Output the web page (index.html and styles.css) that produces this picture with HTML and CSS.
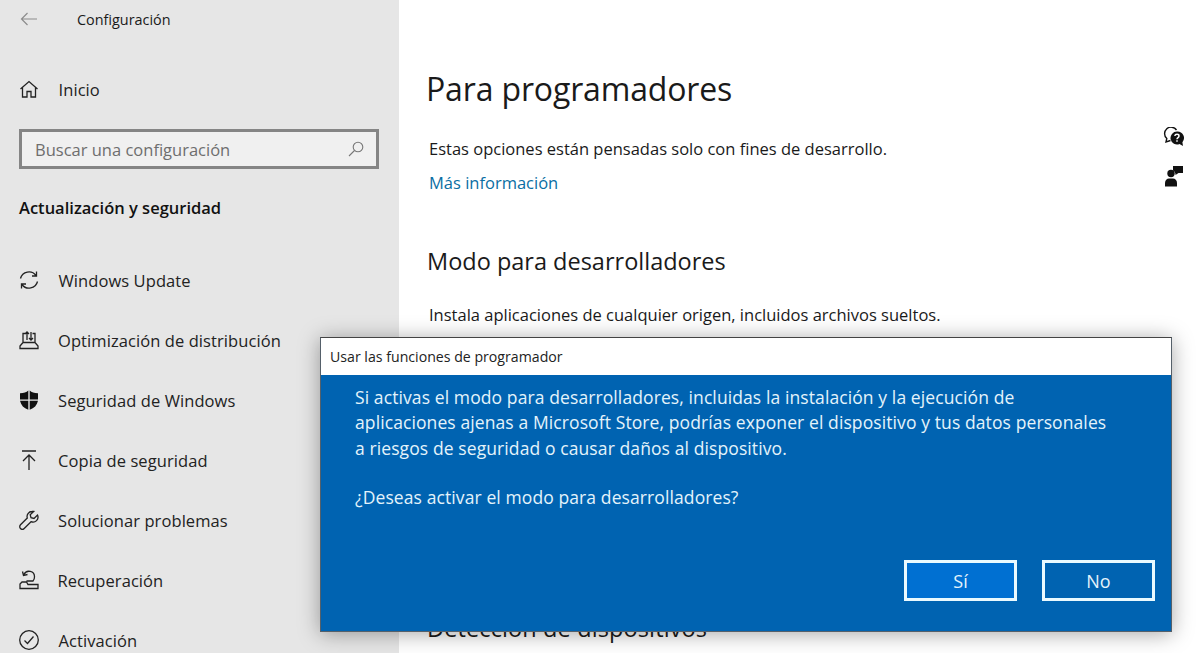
FILE: index.html
```html
<!DOCTYPE html>
<html lang="es">

<head>
    <meta charset="UTF-8">
    <title>Configuración</title>
    <link rel="stylesheet" href="styles.css">
</head>

<body>

    <!-- Sidebar -->
    <aside class="sidebar">
        <div class="title-row">
            <svg class="back" width="18" height="14" viewBox="0 0 18 14"><path d="M17 7H1.500M7.500 1 1.500 7l6 6" /></svg>
            <span>Configuración</span>
        </div>

        <div class="nav-item home">
            <svg viewBox="0 0 20 20"><path d="M1.500 10 10 2.500l8.500 7.500M3.500 8.500V18H8v-5.500h4V18h4.500V8.500" /></svg>
            <span class="shift">Inicio</span>
        </div>

        <div class="search">
            <span>Buscar una configuración</span>
            <svg viewBox="0 0 16 16"><circle cx="10" cy="6" r="4.800" /><path d="M6.500 9.500 1 15" /></svg>
        </div>

        <h3 class="section">Actualización y seguridad</h3>

        <nav class="nav-list">
            <div class="nav-item">
                <svg viewBox="0 0 20 20"><path d="M1.500 8.500A8.700 8.700 0 0 1 17 5.500M17.500 1.500v4.500H13M18.500 11.500A8.700 8.700 0 0 1 3 14.500M2.500 18.500V14H7" /></svg>
                <span class="shift">Windows Update</span>
            </div>
            <div class="nav-item">
                <svg viewBox="0 0 20 20"><path d="M4 12.500V3.500h2.500M13.500 3.500H16v9M1 18.500v-2.500l3-3.500h12l3 3.500v2.500zM8 10V2M6 4l2-2 2 2M12 2v8M10 8l2 2 2-2" /></svg>
                <span>Optimización de distribución</span>
            </div>
            <div class="nav-item">
                <svg viewBox="0 0 20 20"><path class="solid" d="M10.700.500c2 1.800 4.300 2.600 8.300 2.800v6.200h-8.300zM9.300.500v9H1V3.300c4-.2 6.300-1 8.300-2.800zM1 10.800h8.300v9C4.800 18.300 2 15.300 1 10.800zM10.700 10.800H19c-1 4.500-3.800 7.500-8.300 9z" /></svg>
                <span>Seguridad de Windows</span>
            </div>
            <div class="nav-item">
                <svg viewBox="0 0 20 20"><path d="M3 1h14M10 20V5M4 11l6-6 6 6" /></svg>
                <span>Copia de seguridad</span>
            </div>
            <div class="nav-item">
                <svg viewBox="0 0 20 20"><path d="M13 1.500a5 5 0 0 0-4.700 6.500L1.500 14.800a2.600 2.600 0 0 0 3.700 3.700L12 11.700A5 5 0 0 0 18.500 5l-3.500 3.500-3-.8-.8-3L14.700 1.500a5 5 0 0 0-1.700 0z" /></svg>
                <span>Solucionar problemas</span>
            </div>
            <div class="nav-item">
                <svg viewBox="0 0 20 20"><path d="M5 4.500A5.500 5.500 0 0 1 15.500 7c0 1.500-.5 3-1.500 4H7.500M3.500 1.500l1 4 4-1M1 18.500v-4.500l2-2h4.500l1.500 2.500h10v4z" /></svg>
                <span class="shift-small">Recuperación</span>
            </div>
            <div class="nav-item">
                <svg viewBox="0 0 20 20"><circle cx="10" cy="10" r="9.300" /><path d="M5.500 10.500 8.500 13.500 14.500 6.500" /></svg>
                <span class="shift">Activación</span>
            </div>
        </nav>
    </aside>

    <!-- Main content -->
    <main class="content">
        <h1>Para programadores</h1>
        <p class="intro">Estas opciones están pensadas solo con fines de desarrollo.</p>
        <a class="link" href="#">Más información</a>

        <h2>Modo para desarrolladores</h2>
        <p class="install">Instala aplicaciones de cualquier origen, incluidos archivos sueltos.</p>

        <h2 class="detect">Detección de dispositivos</h2>

        <div class="side-icons">
            <svg width="22" height="20" viewBox="0 0 22 20">
                <path class="bubble" d="M7.500 13.500 3 15l.8-3.500A6.500 6.500 0 1 1 13.500 3" />
                <path d="M14 4.500a6.500 6.500 0 1 0 2.500 12.500l3.500 2-.6-3.800A6.500 6.500 0 0 0 14 4.500z" />
                <path class="mark" d="M11.800 9c.3-2.200 4.200-2.200 4.200 0 0 1.700-2 1.500-2 3.300M14 13.300v1.500" />
            </svg>
            <svg width="22" height="22" viewBox="0 0 22 22">
                <path d="M10 1h10v7h-4.500l-3 2c0-2-.7-3.500-2.500-4.500z" />
                <circle cx="8" cy="8.500" r="3.700" />
                <path d="M2 21.500v-3.500c0-3 2-4.500 4-4.500h4c2 0 4 1.500 4 4.500v3.500z" />
            </svg>
        </div>
    </main>

    <!-- Dialog -->
    <div class="dialog">
        <div class="dialog-title">Usar las funciones de programador</div>
        <div class="dialog-body">
            <p>Si activas el modo para desarrolladores, incluidas la instalación y la ejecución de<br>aplicaciones ajenas a Microsoft Store, podrías exponer el dispositivo y tus datos personales<br>a riesgos de seguridad o causar daños al dispositivo.</p>
            <p class="question">¿Deseas activar el modo para desarrolladores?</p>
            <div class="buttons">
                <button class="btn btn-active" type="button">Sí</button>
                <button class="btn" type="button">No</button>
            </div>
        </div>
    </div>

</body>

</html>
```

FILE: styles.css
```css
/* General Reset */
* {
    margin: 0;
    padding: 0;
    box-sizing: border-box;
    font-family: "Open Sans", "Noto Sans", sans-serif;
}

body {
    width: 1198px;
    height: 653px;
    display: flex;
    overflow: hidden;
    position: relative;
    background: #fff;
    color: #1a1a1a;
}

/* Sidebar */
.sidebar {
    width: 399px;
    height: 653px;
    flex: none;
    background: #e6e6e6;
    overflow: hidden;
}

.title-row {
    height: 38px;
    display: flex;
    align-items: center;
    padding-left: 20px;
    font-size: 14.400px;
}

.title-row span {
    margin-left: 39px;
}

svg {
    flex: none;
    fill: none;
    stroke: currentColor;
}

.back {
    stroke: #8c8c8c;
    stroke-width: 1.200;
}

.nav-item {
    height: 60px;
    display: flex;
    align-items: center;
    padding-left: 19px;
    font-size: 16.500px;
    letter-spacing: 0.080px;
    color: #222;
}

.nav-item svg {
    width: 20px;
    height: 20px;
    margin-right: 19px;
    stroke: #222;
    stroke-width: 1.300;
}

.nav-item .solid {
    fill: #111;
    stroke: none;
}

.nav-item .shift {
    margin-left: 0.500px;
}

.nav-item .shift-small {
    margin-left: -0.500px;
}

.home {
    height: 44px;
    margin-top: 29px;
}

.search {
    width: 360px;
    height: 40px;
    margin: 18px 0 0 19px;
    padding: 0 12px 0 13px;
    display: flex;
    align-items: center;
    justify-content: space-between;
    background: #f0f0f0;
    border: 3px solid #858585;
    font-size: 16.500px;
    color: #6e6e6e;
}

.search svg {
    width: 16px;
    height: 16px;
    stroke: #777;
    stroke-width: 1.100;
}

.section {
    margin: 28px 0 0 19px;
    font-size: 16.500px;
    font-weight: 600;
    line-height: 22px;
    color: #111;
}

.nav-list {
    margin-top: 31px;
}

/* Main content */
.content {
    flex: 1;
    position: relative;
    padding: 67px 0 0 27px;
}

h1 {
    font-size: 32px;
    font-weight: 400;
    line-height: 44px;
    letter-spacing: -0.150px;
    color: #1a1a1a;
}

h2 {
    margin-top: 50px;
    margin-left: 1px;
    font-size: 23.500px;
    font-weight: 400;
    line-height: 32px;
    color: #1a1a1a;
}

.intro,
.install {
    margin-left: 3px;
    font-size: 16.500px;
    line-height: 24px;
}

.intro {
    margin-top: 26px;
}

.install {
    margin-top: 26px;
}

.link {
    display: block;
    margin: 10px 0 0 3px;
    font-size: 16.500px;
    line-height: 24px;
    color: #0a6ea3;
    text-decoration: none;
}

h2.detect {
    margin-top: 285px;
    letter-spacing: 0.120px;
}

.side-icons {
    position: absolute;
    top: 127px;
    left: 764px;
    display: flex;
    flex-direction: column;
    gap: 18px;
}

.side-icons svg {
    fill: #111;
    stroke: none;
}

.side-icons .bubble {
    fill: none;
    stroke: #111;
    stroke-width: 1.400;
}

.side-icons .mark {
    fill: none;
    stroke: #fff;
    stroke-width: 1.500;
}

/* Dialog */
.dialog {
    position: absolute;
    top: 337px;
    left: 320px;
    width: 852px;
    height: 295px;
    display: flex;
    flex-direction: column;
    border: 1px solid #55606a;
    border-top-color: #444;
    box-shadow: 0 2px 20px rgba(0, 0, 0, 0.35);
}

.dialog-title {
    height: 37px;
    flex: none;
    padding-left: 9px;
    display: flex;
    align-items: center;
    background: #fff;
    font-size: 14.150px;
    color: #222;
}

.dialog-body {
    flex: 1;
    padding: 10px 16px 30px 34px;
    display: flex;
    flex-direction: column;
    background: #0063b1;
    color: #e4f3fb;
    font-size: 17.500px;
    letter-spacing: 0.100px;
    line-height: 25.300px;
}

.question {
    margin-top: 24px;
}

.buttons {
    margin-top: auto;
    display: flex;
    justify-content: flex-end;
    gap: 25px;
}

.btn {
    width: 113px;
    height: 41px;
    background: #0063b1;
    border: 3px solid #eafaff;
    color: #e4f3fb;
    font-size: 18px;
}

.btn-active {
    background: #0070d2;
}
```
